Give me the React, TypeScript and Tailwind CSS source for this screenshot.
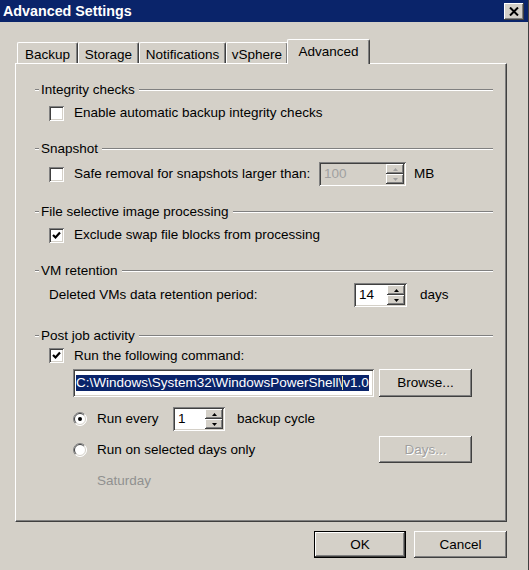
import React from 'react';

// classic 3D borders
const raised = 'shadow-[inset_-1px_-1px_0_#404040,inset_1px_1px_0_#ffffff,inset_-2px_-2px_0_#808080,inset_2px_2px_0_#d4d0c8]';
const sunken = 'shadow-[inset_1px_1px_0_#808080,inset_-1px_-1px_0_#ffffff,inset_2px_2px_0_#404040,inset_-2px_-2px_0_#d4d0c8]';

const Check = ({ checked }: { checked?: boolean }) => (
    <div className={`w-[15px] h-[15px] bg-white shrink-0 flex items-center justify-center ${sunken}`}>
        {checked && (
            <svg width="9" height="9" viewBox="0 0 9 9">
                <path d="M1 4 L3.5 6.5 L8 1.5" stroke="#000" strokeWidth="2.2" fill="none" />
            </svg>
        )}
    </div>
);

const Radio = ({ on }: { on?: boolean }) => (
    <svg width="14" height="14" viewBox="0 0 14 14" className="shrink-0">
        <circle cx="7" cy="7" r="6.5" fill="#ffffff" />
        <path d="M2.4 11.6 A6.5 6.5 0 0 1 11.6 2.4" stroke="#808080" strokeWidth="1" fill="none" />
        <path d="M3.1 10.9 A5.5 5.5 0 0 1 10.9 3.1" stroke="#404040" strokeWidth="1" fill="none" />
        <path d="M11.6 2.4 A6.5 6.5 0 0 1 2.4 11.6" stroke="#ffffff" strokeWidth="1" fill="none" />
        <path d="M10.9 3.1 A5.5 5.5 0 0 1 3.1 10.9" stroke="#d4d0c8" strokeWidth="1" fill="none" />
        {on && <circle cx="7" cy="7" r="2" fill="#000" />}
    </svg>
);

const Arrow = ({ up, color }: { up?: boolean; color: string }) => (
    <svg width="5" height="3" viewBox="0 0 5 3">
        <path d={up ? 'M2.5 0 L5 3 L0 3 Z' : 'M0 0 L5 0 L2.5 3 Z'} fill={color} />
    </svg>
);

const Spin = ({ value, width, disabled }: { value: string; width: string; disabled?: boolean }) => (
    <div className={`${width} h-[24px] flex p-[2px] ${sunken} ${disabled ? 'bg-[#d4d0c8] text-[#a0a0a0]' : 'bg-white text-black'}`}>
        <div className="flex-1 flex items-center pl-[3px]">{value}</div>
        <div className="w-[18px] flex flex-col">
            <div className={`flex-1 flex items-center justify-center bg-[#d4d0c8] ${raised}`}>
                <Arrow up color={disabled ? '#a0a0a0' : '#000'} />
            </div>
            <div className={`flex-1 flex items-center justify-center bg-[#d4d0c8] ${raised}`}>
                <Arrow color={disabled ? '#a0a0a0' : '#000'} />
            </div>
        </div>
    </div>
);

const Header = ({ title, className }: { title: string; className: string }) => (
    <div className={`flex items-center h-[16px] ${className}`}>
        <div className="w-[4px] border-t border-b border-t-[#808080] border-b-white" />
        <span className="ml-[2px] mr-[4px]">{title}</span>
        <div className="flex-1 border-t border-b border-t-[#808080] border-b-white" />
    </div>
);

const Tab = ({ label, w }: { label: string; w: string }) => (
    <div className={`${w} h-[21px] pt-[3px] flex items-center justify-center border-l border-t border-white border-r border-r-[#404040] rounded-t-[2px] shadow-[inset_-1px_0_0_#808080]`}>
        {label}
    </div>
);

const App = () => {
    return (
        <div className="w-[529px] h-[570px] bg-[#d4d0c8] text-black text-[13.5px] leading-[16px] font-['Liberation_Sans',Arial,sans-serif] overflow-hidden border-r border-r-[#404040]">
            {/* title bar */}
            <div className="h-[22px] bg-[#0a246a] flex items-center pl-[3px] pr-[4px]">
                <span className="text-white font-bold text-[14.3px]">Advanced Settings</span>
                <div className={`ml-auto w-[20px] h-[17px] bg-[#d4d0c8] flex items-center justify-center ${raised}`}>
                    <svg width="10" height="9" viewBox="0 0 10 9">
                        <path d="M1 0.5 L9 8.5 M9 0.5 L1 8.5" stroke="#000" strokeWidth="2" />
                    </svg>
                </div>
            </div>

            {/* tabs */}
            <div className="mt-[17px] ml-[17px] h-[24px] flex items-end">
                <Tab label="Backup" w="w-[61px]" />
                <Tab label="Storage" w="w-[61px]" />
                <Tab label="Notifications" w="w-[87px]" />
                <Tab label="vSphere" w="w-[62px]" />
                <div className="relative z-10 -ml-[1px] -mb-[1px] w-[83px] h-[25px] pb-[1px] bg-[#d4d0c8] flex items-center justify-center border-l border-t border-white border-r border-r-[#404040] rounded-t-[2px] shadow-[inset_-1px_0_0_#808080]">
                    Advanced
                </div>
            </div>

            {/* panel */}
            <div className="ml-[15px] w-[492px] h-[459px] border-l border-t border-white border-r border-b border-r-[#404040] border-b-[#404040] shadow-[inset_-1px_-1px_0_#808080]">
                <div className="ml-[19px] w-[458px] flex flex-col">
                    <Header title="Integrity checks" className="mt-[18px]" />
                    <div className="mt-[4px] h-[22px] flex items-center pl-[14px]">
                        <Check />
                        <span className="ml-[10px]">Enable automatic backup integrity checks</span>
                    </div>

                    <Header title="Snapshot" className="mt-[17px]" />
                    <div className="mt-[5px] h-[24px] flex items-center pl-[14px]">
                        <Check />
                        <span className="ml-[10px] w-[245px]">Safe removal for snapshots larger than:</span>
                        <Spin value="100" width="w-[87px]" disabled />
                        <span className="ml-[8px]">MB</span>
                    </div>

                    <Header title="File selective image processing" className="mt-[18px]" />
                    <div className="mt-[4px] h-[22px] flex items-center pl-[14px]">
                        <Check checked />
                        <span className="ml-[10px]">Exclude swap file blocks from processing</span>
                    </div>

                    <Header title="VM retention" className="mt-[17px]" />
                    <div className="mt-[4px] h-[24px] flex items-center pl-[14px]">
                        <span className="w-[305px]">Deleted VMs data retention period:</span>
                        <Spin value="14" width="w-[53px]" />
                        <span className="ml-[13px]">days</span>
                    </div>

                    <Header title="Post job activity" className="mt-[21px]" />
                    <div className="mt-[1px] h-[21px] flex items-center pl-[14px]">
                        <Check checked />
                        <span className="ml-[10px]">Run the following command:</span>
                    </div>
                    <div className="mt-[3px] h-[28px] flex items-center pl-[38px]">
                        <div className={`w-[301px] h-[28px] bg-white p-[2px] flex items-center ${sunken}`}>
                            <span className="ml-[1px] bg-[#0a246a] text-white whitespace-nowrap overflow-hidden">
                                C:\Windows\System32\WindowsPowerShell\<span className="inline-block w-[1px] h-[14px] align-middle bg-[#e8d890]" />v1.0
                            </span>
                        </div>
                        <button className={`ml-[5px] w-[93px] h-[28px] bg-[#d4d0c8] ${raised}`}>Browse...</button>
                    </div>
                    <div className="mt-[10px] h-[24px] flex items-center pl-[38px]">
                        <Radio on />
                        <span className="ml-[10px] w-[76px]">Run every</span>
                        <Spin value="1" width="w-[52px]" />
                        <span className="ml-[12px]">backup cycle</span>
                    </div>
                    <div className="mt-[5px] h-[27px] flex items-center pl-[38px]">
                        <Radio />
                        <span className="ml-[10px] w-[282px]">Run on selected days only</span>
                        <button className={`w-[93px] h-[27px] bg-[#d4d0c8] text-[#a0a0a0] [text-shadow:1px_1px_0_#fff] ${raised}`}>Days...</button>
                    </div>
                    <div className="mt-[10px] h-[16px] pl-[62px] text-[#909090]">Saturday</div>
                </div>
            </div>

            {/* buttons */}
            <div className="mt-[9px] w-[507px] flex justify-end gap-[8px]">
                <button className={`w-[92px] h-[27px] bg-[#d4d0c8] border border-black ${raised}`}>OK</button>
                <button className={`w-[93px] h-[27px] bg-[#d4d0c8] ${raised}`}>Cancel</button>
            </div>
        </div>
    );
};

export default App;
